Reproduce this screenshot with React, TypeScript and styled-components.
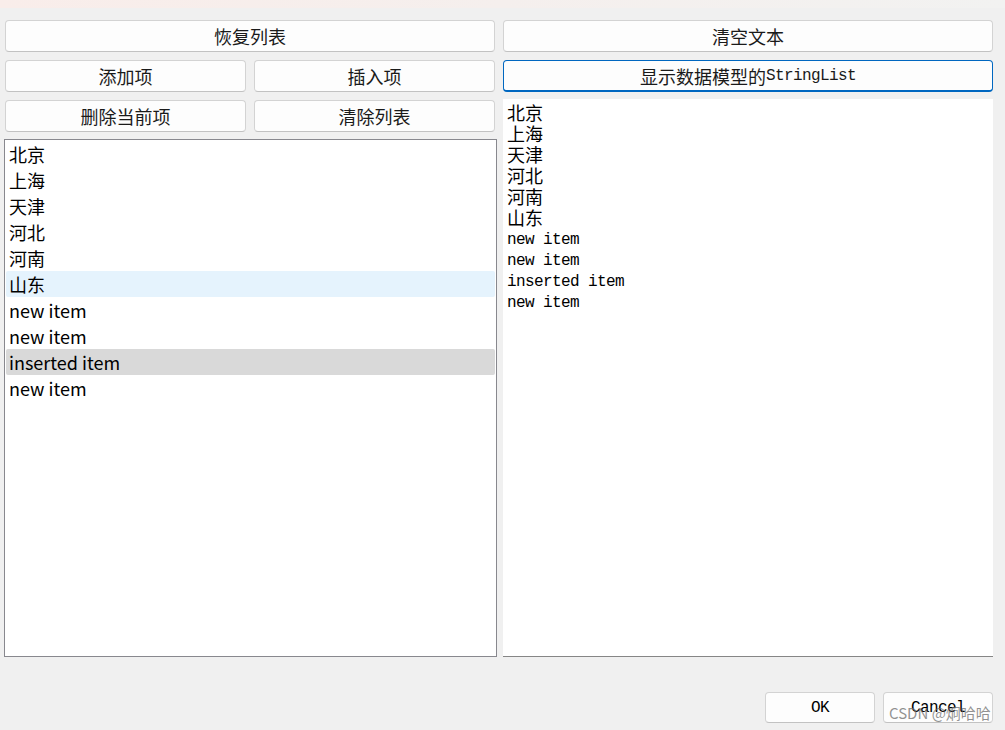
import React from "react";
import styled, { createGlobalStyle, css } from "styled-components";

const Global = createGlobalStyle`
  html, body { margin: 0; padding: 0; background: #f0f0f0; }
  * { box-sizing: border-box; }
`;

const Page = styled.div`
  position: relative;
  width: 1005px;
  height: 730px;
  background: #f0f0f0;
  display: flex;
  flex-direction: column;
  overflow: hidden;
`;

const TopStrip = styled.div`
  height: 8px;
  background: linear-gradient(90deg, #f9edea 0%, #f5efed 50%, #f2f2f1 100%);
`;

const Body = styled.div`
  display: grid;
  grid-template-columns: 493px 490px;
  column-gap: 6px;
  padding: 12px 12px 0 4px;
`;

const Column = styled.div`
  display: flex;
  flex-direction: column;
`;

const ButtonGrid = styled.div<{ $inset?: boolean }>`
  display: grid;
  grid-template-columns: 1fr 1fr;
  gap: 8px;
  padding: ${(p) => (p.$inset ? "0 2px 0 1px" : "0")};
`;

const Button = styled.button<{ $wide?: boolean; $focused?: boolean }>`
  height: 32px;
  margin: 0;
  padding: 0;
  background: #fdfdfd;
  border: 1px solid #d3d3d3;
  border-bottom-color: #c2c2c2;
  border-radius: 4px;
  font-family: "Noto Sans CJK SC", sans-serif;
  font-size: 18px;
  line-height: 20px;
  color: #1a1a1a;
  display: flex;
  align-items: center;
  justify-content: center;
  ${(p) => p.$wide && css`grid-column: 1 / span 2;`}
  ${(p) =>
    p.$focused &&
    css`
      border-color: #0067c0;
      border-bottom-width: 2px;
      padding-top: 1px;
    `}
`;

const Latin = styled.span`
  font-family: "Liberation Mono", monospace;
  font-size: 16px;
  letter-spacing: -0.6px;
`;

const ListBox = styled.div`
  margin-top: 7px;
  height: 518px;
  background: #ffffff;
  border: 1px solid #88888e;
  padding: 1px;
  display: flex;
  flex-direction: column;
`;

const ListRow = styled.div<{ $state?: "hover" | "selected" }>`
  height: 26px;
  padding-left: 3px;
  border-radius: 2px;
  font-family: "Noto Sans CJK SC", sans-serif;
  font-size: 18px;
  line-height: 26px;
  color: #000;
  background: ${(p) =>
    p.$state === "hover" ? "#e5f3fd" : p.$state === "selected" ? "#d9d9d9" : "transparent"};
`;

const TextEdit = styled.div`
  margin-top: 7px;
  height: 558px;
  background: #ffffff;
  border-bottom: 1px solid #868686;
  padding: 3px 4px;
  display: flex;
  flex-direction: column;
`;

const TextLine = styled.div<{ $cjk?: boolean }>`
  height: 21px;
  color: #000;
  white-space: pre;
  ${(p) =>
    p.$cjk
      ? css`
          font-family: "Noto Sans CJK SC", sans-serif;
          font-size: 18px;
          line-height: 21px;
        `
      : css`
          font-family: "Liberation Mono", monospace;
          font-size: 16px;
          letter-spacing: -0.6px;
          line-height: 21px;
          padding-top: 2px;
        `}
`;

const Footer = styled.div`
  display: flex;
  justify-content: flex-end;
  gap: 8px;
  margin-top: 35px;
  padding-right: 12px;
`;

const DialogButton = styled.button`
  width: 110px;
  height: 31px;
  margin: 0;
  padding: 0;
  background: #fdfdfd;
  border: 1px solid #d3d3d3;
  border-bottom-color: #c2c2c2;
  border-radius: 4px;
  font-family: "Liberation Mono", monospace;
  font-size: 16px;
  letter-spacing: -0.6px;
  color: #000;
`;

const Watermark = styled.div`
  position: absolute;
  left: 889px;
  top: 704px;
  font-family: "Noto Sans CJK SC", sans-serif;
  font-size: 15px;
  line-height: 18px;
  color: rgba(110, 110, 110, 0.75);
  pointer-events: none;
  white-space: nowrap;
`;

const listItems: { text: string; state?: "hover" | "selected" }[] = [
  { text: "北京" },
  { text: "上海" },
  { text: "天津" },
  { text: "河北" },
  { text: "河南" },
  { text: "山东", state: "hover" },
  { text: "new item" },
  { text: "new item" },
  { text: "inserted item", state: "selected" },
  { text: "new item" },
];

const isCjk = (s: string) => /[\u4e00-\u9fff]/.test(s);

export default function App() {
  return (
    <Page>
      <Global />
      <TopStrip />
      <Body>
        <Column>
          <ButtonGrid $inset>
            <Button $wide>恢复列表</Button>
            <Button>添加项</Button>
            <Button>插入项</Button>
            <Button>删除当前项</Button>
            <Button>清除列表</Button>
          </ButtonGrid>
          <ListBox>
            {listItems.map((it, i) => (
              <ListRow key={i} $state={it.state}>
                {it.text}
              </ListRow>
            ))}
          </ListBox>
        </Column>
        <Column>
          <ButtonGrid>
            <Button $wide>清空文本</Button>
            <Button $wide $focused>
              显示数据模型的<Latin>StringList</Latin>
            </Button>
          </ButtonGrid>
          <TextEdit>
            {listItems.map((it, i) => (
              <TextLine key={i} $cjk={isCjk(it.text)}>
                {it.text}
              </TextLine>
            ))}
          </TextEdit>
        </Column>
      </Body>
      <Footer>
        <DialogButton>OK</DialogButton>
        <DialogButton>Cancel</DialogButton>
      </Footer>
      <Watermark>CSDN @炯哈哈</Watermark>
    </Page>
  );
}
